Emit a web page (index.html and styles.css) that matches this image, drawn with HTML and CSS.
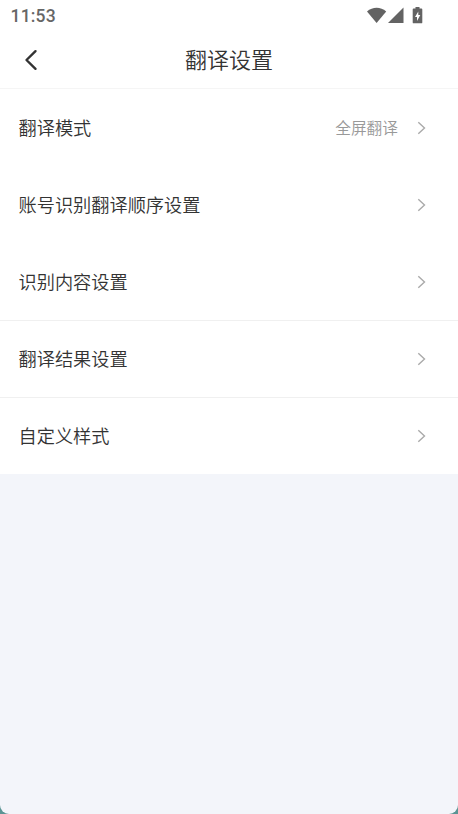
FILE: index.html
```html
<!DOCTYPE html>
<html lang="zh-CN">
<head>
<meta charset="utf-8">
<title>翻译设置</title>
<link rel="stylesheet" href="styles.css">
</head>
<body>
<div class="screen">
  <div class="status">
    <span class="clock">11:53</span>
    <svg class="status-icons" width="58" height="18" viewBox="0 0 58 18" fill="#636363">
      <path d="M0 4.400C5.600-.4 13.600-.4 19.200 4.400L9.600 16z"/>
      <path d="M36.500 .4V16H21z"/>
      <path d="M48.500 0h4v1.500h1.900q.9 0 .9.900v13q0 .9-.9.900h-7.800q-.9 0-.9-.9v-13q0-.9.900-.9h1.900z"/>
      <path fill="#fff" d="M51.300 4.400v3.700h2l-3.300 5.800V10h-2z"/>
    </svg>
  </div>
  <header class="header">
    <svg class="back" width="14" height="22" viewBox="0 0 14 22"><path d="M11.500 2.200L2.500 11l9 8.800"/></svg>
    <h1 class="title">翻译设置</h1>
  </header>
  <main class="list">
    <div class="row"><span class="label">翻译模式</span><span class="value">全屏翻译</span><svg class="chevron" width="9" height="14" viewBox="0 0 9 14"><path d="M1.300 1.200L7.500 7l-6.200 5.800"/></svg></div>
    <div class="row"><span class="label">账号识别翻译顺序设置</span><svg class="chevron" width="9" height="14" viewBox="0 0 9 14"><path d="M1.300 1.200L7.500 7l-6.200 5.800"/></svg></div>
    <div class="row lined"><span class="label">识别内容设置</span><svg class="chevron" width="9" height="14" viewBox="0 0 9 14"><path d="M1.300 1.200L7.500 7l-6.200 5.800"/></svg></div>
    <div class="row lined"><span class="label">翻译结果设置</span><svg class="chevron" width="9" height="14" viewBox="0 0 9 14"><path d="M1.300 1.200L7.500 7l-6.200 5.800"/></svg></div>
    <div class="row"><span class="label">自定义样式</span><svg class="chevron" width="9" height="14" viewBox="0 0 9 14"><path d="M1.300 1.200L7.500 7l-6.200 5.800"/></svg></div>
  </main>
</div>
</body>
</html>
```
FILE: styles.css
```css
* { box-sizing: border-box; }
body {
  margin: 0;
  background: #5b9494;
  font-family: Roboto, "Noto Sans CJK SC", sans-serif;
  color: #333;
}
.screen {
  height: 814px;
  background: #f3f5fa;
  border-radius: 0 0 9px 9px;
  overflow: hidden;
}
.status {
  display: flex;
  justify-content: space-between;
  height: 32px;
  padding: 7px 33px 0 10.500px;
  background: #fff;
}
.clock {
  font-size: 17.500px;
  font-weight: 480;
  line-height: 18px;
  letter-spacing: 0.200px;
  color: #666;
}
.header {
  display: flex;
  align-items: center;
  height: 57px;
  padding: 0 24px;
  background: #fff;
  border-bottom: 1px solid #f5f5f5;
}
.back {
  fill: none;
  stroke: #333;
  stroke-width: 2.400;
  stroke-linecap: round;
  stroke-linejoin: round;
}
.title {
  flex: 1;
  margin: 0 14px 0 0;
  padding-top: 2px;
  text-align: center;
  font-size: 22px;
  font-weight: 350;
  line-height: 32px;
}
.list {
  display: grid;
  grid-template-rows: 77px 77px 78px 77px 76px;
  background: #fff;
}
.row {
  display: flex;
  align-items: center;
  padding: 0 32px 0 18.500px;
}
.row.lined { border-bottom: 1px solid #f0f0f0; }
.label {
  flex: 1;
  padding-top: 2px;
  font-size: 18.200px;
  font-weight: 350;
  line-height: 26px;
}
.value {
  margin-right: 19px;
  padding-top: 2px;
  font-size: 15.700px;
  font-weight: 350;
  line-height: 24px;
  color: #999;
}
.chevron {
  fill: none;
  stroke: #aaa;
  stroke-width: 1.400;
}
```
